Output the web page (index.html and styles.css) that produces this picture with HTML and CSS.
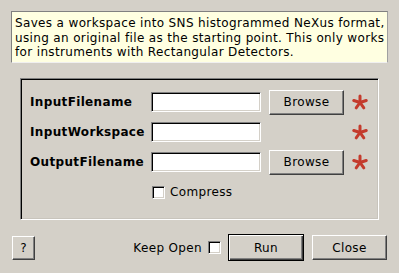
FILE: index.html
```html
<!DOCTYPE html>
<html lang="en">

<head>
    <meta charset="UTF-8">
    <title>SaveNexusProcessed</title>
    <link rel="stylesheet" href="styles.css">
</head>

<body>
    <p class="info">
        Saves a workspace into SNS histogrammed NeXus format,<br>
        using an original file as the starting point. This only works<br>
        for instruments with Rectangular Detectors.
    </p>

    <section class="props">
        <label class="prop-label">InputFilename</label>
        <input class="prop-input" type="text">
        <button class="btn">Browse</button>
        <span class="required"><svg viewBox="0 0 16 16"><g><line x1="8" y1="8.5" x2="8" y2="2" /><line x1="8" y1="8.5" x2="14.2" y2="6.5" /><line x1="8" y1="8.5" x2="1.8" y2="6.5" /><line x1="8" y1="8.5" x2="11.8" y2="13.8" /><line x1="8" y1="8.5" x2="4.2" y2="13.8" /></g></svg></span>

        <label class="prop-label">InputWorkspace</label>
        <input class="prop-input" type="text">
        <span></span>
        <span class="required"><svg viewBox="0 0 16 16"><g><line x1="8" y1="8.5" x2="8" y2="2" /><line x1="8" y1="8.5" x2="14.2" y2="6.5" /><line x1="8" y1="8.5" x2="1.8" y2="6.5" /><line x1="8" y1="8.5" x2="11.8" y2="13.8" /><line x1="8" y1="8.5" x2="4.2" y2="13.8" /></g></svg></span>

        <label class="prop-label">OutputFilename</label>
        <input class="prop-input" type="text">
        <button class="btn">Browse</button>
        <span class="required"><svg viewBox="0 0 16 16"><g><line x1="8" y1="8.5" x2="8" y2="2" /><line x1="8" y1="8.5" x2="14.2" y2="6.5" /><line x1="8" y1="8.5" x2="1.8" y2="6.5" /><line x1="8" y1="8.5" x2="11.8" y2="13.8" /><line x1="8" y1="8.5" x2="4.2" y2="13.8" /></g></svg></span>

        <span></span>
        <label class="check compress"><span class="checkbox"></span>Compress</label>
    </section>

    <footer class="actions">
        <button class="btn btn-help">?</button>
        <span class="spacer"></span>
        <label class="check keep-open">Keep Open <span class="checkbox"></span></label>
        <button class="btn btn-default">Run</button>
        <button class="btn">Close</button>
    </footer>
</body>

</html>
```

FILE: styles.css
```css
html,
button,
input {
    font-family: 'DejaVu Sans', 'Liberation Sans', sans-serif;
    font-size: 12px;
    letter-spacing: 0.35px;
    color: #000;
}

body {
    margin: 0;
    width: 399px;
    height: 273px;
    background: #d4d0c8;
    overflow: hidden;
}

.info {
    box-sizing: border-box;
    margin: 11px 0 0 11px;
    width: 377px;
    height: 52px;
    padding: 4px 3px 0 3px;
    line-height: 14.5px;
    white-space: nowrap;
    overflow: hidden;
    background: #ffffe1;
    border: 1px solid;
    border-color: #808080 #a0a0a0 #f0f0f0 #808080;
}

/* sunken group with the algorithm properties */
.props {
    box-sizing: border-box;
    margin: 15px 0 0 20px;
    width: 359px;
    height: 142px;
    padding: 8px 0 0 9px;
    border: 1px solid;
    border-color: #808080 #fff #fff #808080;
    box-shadow: inset 1px 1px 0 #000, inset -1px -1px 0 #c8c4bc;
    display: grid;
    grid-template-columns: 113px 110px 75px 16px;
    grid-auto-rows: 30px;
    column-gap: 8px;
    align-items: center;
}

.prop-label {
    font-weight: bold;
    white-space: nowrap;
}

.prop-input {
    box-sizing: border-box;
    width: 110px;
    height: 20px;
    margin: 0;
    padding: 0 2px;
    background: #fff;
    border: 1px solid;
    border-color: #808080 #fff #fff #808080;
    box-shadow: inset 1px 1px 0 #000, inset -1px -1px 0 #d4d0c8;
    outline: none;
}

.btn {
    box-sizing: border-box;
    width: 75px;
    height: 25px;
    margin: 0;
    padding: 0;
    background: #d4d0c8;
    border: 1px solid;
    border-color: #fff #404040 #404040 #fff;
    box-shadow: inset -1px -1px 0 #808080;
}

.required {
    width: 16px;
    height: 16px;
}

.required svg {
    display: block;
    width: 16px;
    height: 16px;
}

.required g {
    stroke: #c43b2d;
    stroke-width: 3;
    stroke-linecap: round;
}

.check {
    display: flex;
    align-items: center;
    gap: 5px;
    white-space: nowrap;
}

.compress {
    grid-column: 2 / span 2;
    margin-left: 1px;
}

.checkbox {
    box-sizing: border-box;
    display: inline-block;
    width: 13px;
    height: 13px;
    background: #fff;
    border: 1px solid;
    border-color: #808080 #fff #fff #808080;
    box-shadow: inset 1px 1px 0 #000, inset -1px -1px 0 #d4d0c8;
}

.actions {
    display: flex;
    align-items: center;
    margin-top: 14px;
    padding: 0 12px;
    height: 27px;
}

.btn-help {
    width: 23px;
    height: 24px;
}

.spacer {
    flex: 1;
}

.keep-open {
    gap: 6px;
    margin-right: 7px;
}

.btn-default {
    width: 76px;
    height: 27px;
    margin-right: 8px;
    border: 1px solid #000;
    box-shadow: inset 1px 1px 0 #fff, inset -1px -1px 0 #404040, inset -2px -2px 0 #808080;
}
```
